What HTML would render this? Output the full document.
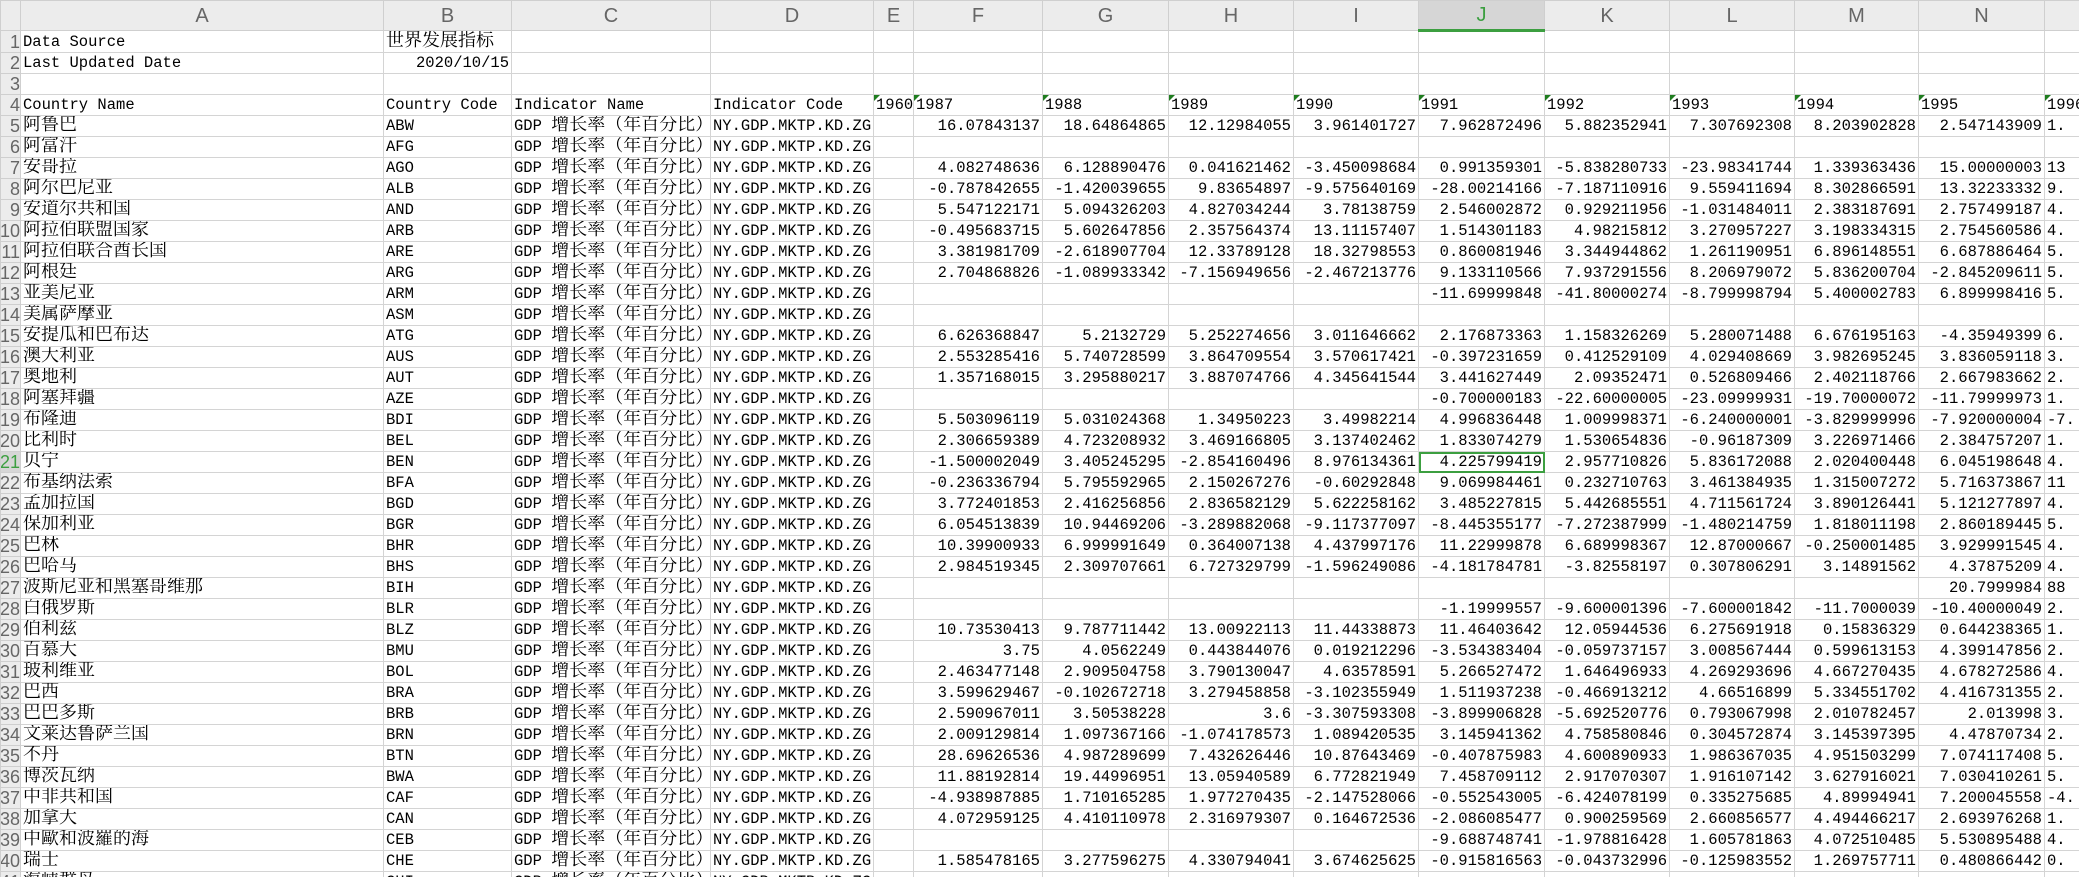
<!DOCTYPE html>
<html><head><meta charset="utf-8">
<style>
html,body{margin:0;padding:0;background:#fff;width:2079px;height:877px;overflow:hidden}
table{border-collapse:collapse;table-layout:fixed;width:2079px;font-family:"Liberation Mono","Noto Serif CJK SC",monospace;font-size:15.5px;color:#000}
td,th{border:1px solid #d4d4d4;height:20px;padding:0 2px;white-space:nowrap;overflow:hidden;line-height:20px;position:relative}
thead th{height:28px;background:#ececec;color:#666;font-family:"Liberation Sans",sans-serif;font-weight:normal;font-size:20px;border-color:#cfcfcf;text-align:center}
tbody th{background:#ececec;color:#666;font-family:"Liberation Sans",sans-serif;font-weight:normal;font-size:18px;text-align:right;padding:0;border-color:#cfcfcf;direction:rtl}
.c{font-size:18px}
b{font-weight:normal;font-size:18px}
tbody td:nth-child(n+7){text-align:right}
tbody td:nth-child(16){text-align:left}
tr.y td:nth-child(n+6){text-align:left}
tr.y td:nth-child(n+6)::before{content:"";position:absolute;left:0;top:0;border-top:6px solid #1f7d1f;border-right:6px solid transparent}
thead th.sel{background:#d6d6d6;color:#3c9f40;border-bottom:3px solid #3c9f40}
tbody th.sel{background:#d6d6d6;color:#3c9f40}
td.cur{outline:2px solid #3c9f40;outline-offset:-2px}
</style></head><body>
<table>
<colgroup><col style="width:20px"><col style="width:363px"><col style="width:128px"><col style="width:199px"><col style="width:163px"><col style="width:40px"><col style="width:129px"><col style="width:126px"><col style="width:125px"><col style="width:125px"><col style="width:126px"><col style="width:125px"><col style="width:125px"><col style="width:124px"><col style="width:126px"><col style="width:35px"></colgroup>
<thead><tr><th></th><th>A</th><th>B</th><th>C</th><th>D</th><th>E</th><th>F</th><th>G</th><th>H</th><th>I</th><th class="sel">J</th><th>K</th><th>L</th><th>M</th><th>N</th><th></th></tr></thead>
<tbody>
<tr><th>1</th><td>Data Source</td><td class="c">世界发展指标</td><td></td><td></td><td></td><td></td><td></td><td></td><td></td><td></td><td></td><td></td><td></td><td></td><td></td></tr>
<tr><th>2</th><td>Last Updated Date</td><td style="text-align:right">2020/10/15</td><td></td><td></td><td></td><td></td><td></td><td></td><td></td><td></td><td></td><td></td><td></td><td></td><td></td></tr>
<tr><th>3</th><td></td><td></td><td></td><td></td><td></td><td></td><td></td><td></td><td></td><td></td><td></td><td></td><td></td><td></td><td></td></tr>
<tr class="y"><th>4</th><td>Country Name</td><td>Country Code</td><td>Indicator Name</td><td>Indicator Code</td><td>1960</td><td>1987</td><td>1988</td><td>1989</td><td>1990</td><td>1991</td><td>1992</td><td>1993</td><td>1994</td><td>1995</td><td>1996</td></tr>
<tr><th>5</th><td class="c">阿鲁巴</td><td>ABW</td><td>GDP <b>增长率（年百分比）</b></td><td>NY.GDP.MKTP.KD.ZG</td><td></td><td>16.07843137</td><td>18.64864865</td><td>12.12984055</td><td>3.961401727</td><td>7.962872496</td><td>5.882352941</td><td>7.307692308</td><td>8.203902828</td><td>2.547143909</td><td>1.</td></tr>
<tr><th>6</th><td class="c">阿富汗</td><td>AFG</td><td>GDP <b>增长率（年百分比）</b></td><td>NY.GDP.MKTP.KD.ZG</td><td></td><td></td><td></td><td></td><td></td><td></td><td></td><td></td><td></td><td></td><td></td></tr>
<tr><th>7</th><td class="c">安哥拉</td><td>AGO</td><td>GDP <b>增长率（年百分比）</b></td><td>NY.GDP.MKTP.KD.ZG</td><td></td><td>4.082748636</td><td>6.128890476</td><td>0.041621462</td><td>-3.450098684</td><td>0.991359301</td><td>-5.838280733</td><td>-23.98341744</td><td>1.339363436</td><td>15.00000003</td><td>13</td></tr>
<tr><th>8</th><td class="c">阿尔巴尼亚</td><td>ALB</td><td>GDP <b>增长率（年百分比）</b></td><td>NY.GDP.MKTP.KD.ZG</td><td></td><td>-0.787842655</td><td>-1.420039655</td><td>9.83654897</td><td>-9.575640169</td><td>-28.00214166</td><td>-7.187110916</td><td>9.559411694</td><td>8.302866591</td><td>13.32233332</td><td>9.</td></tr>
<tr><th>9</th><td class="c">安道尔共和国</td><td>AND</td><td>GDP <b>增长率（年百分比）</b></td><td>NY.GDP.MKTP.KD.ZG</td><td></td><td>5.547122171</td><td>5.094326203</td><td>4.827034244</td><td>3.78138759</td><td>2.546002872</td><td>0.929211956</td><td>-1.031484011</td><td>2.383187691</td><td>2.757499187</td><td>4.</td></tr>
<tr><th>10</th><td class="c">阿拉伯联盟国家</td><td>ARB</td><td>GDP <b>增长率（年百分比）</b></td><td>NY.GDP.MKTP.KD.ZG</td><td></td><td>-0.495683715</td><td>5.602647856</td><td>2.357564374</td><td>13.11157407</td><td>1.514301183</td><td>4.98215812</td><td>3.270957227</td><td>3.198334315</td><td>2.754560586</td><td>4.</td></tr>
<tr><th>11</th><td class="c">阿拉伯联合酋长国</td><td>ARE</td><td>GDP <b>增长率（年百分比）</b></td><td>NY.GDP.MKTP.KD.ZG</td><td></td><td>3.381981709</td><td>-2.618907704</td><td>12.33789128</td><td>18.32798553</td><td>0.860081946</td><td>3.344944862</td><td>1.261190951</td><td>6.896148551</td><td>6.687886464</td><td>5.</td></tr>
<tr><th>12</th><td class="c">阿根廷</td><td>ARG</td><td>GDP <b>增长率（年百分比）</b></td><td>NY.GDP.MKTP.KD.ZG</td><td></td><td>2.704868826</td><td>-1.089933342</td><td>-7.156949656</td><td>-2.467213776</td><td>9.133110566</td><td>7.937291556</td><td>8.206979072</td><td>5.836200704</td><td>-2.845209611</td><td>5.</td></tr>
<tr><th>13</th><td class="c">亚美尼亚</td><td>ARM</td><td>GDP <b>增长率（年百分比）</b></td><td>NY.GDP.MKTP.KD.ZG</td><td></td><td></td><td></td><td></td><td></td><td>-11.69999848</td><td>-41.80000274</td><td>-8.799998794</td><td>5.400002783</td><td>6.899998416</td><td>5.</td></tr>
<tr><th>14</th><td class="c">美属萨摩亚</td><td>ASM</td><td>GDP <b>增长率（年百分比）</b></td><td>NY.GDP.MKTP.KD.ZG</td><td></td><td></td><td></td><td></td><td></td><td></td><td></td><td></td><td></td><td></td><td></td></tr>
<tr><th>15</th><td class="c">安提瓜和巴布达</td><td>ATG</td><td>GDP <b>增长率（年百分比）</b></td><td>NY.GDP.MKTP.KD.ZG</td><td></td><td>6.626368847</td><td>5.2132729</td><td>5.252274656</td><td>3.011646662</td><td>2.176873363</td><td>1.158326269</td><td>5.280071488</td><td>6.676195163</td><td>-4.35949399</td><td>6.</td></tr>
<tr><th>16</th><td class="c">澳大利亚</td><td>AUS</td><td>GDP <b>增长率（年百分比）</b></td><td>NY.GDP.MKTP.KD.ZG</td><td></td><td>2.553285416</td><td>5.740728599</td><td>3.864709554</td><td>3.570617421</td><td>-0.397231659</td><td>0.412529109</td><td>4.029408669</td><td>3.982695245</td><td>3.836059118</td><td>3.</td></tr>
<tr><th>17</th><td class="c">奥地利</td><td>AUT</td><td>GDP <b>增长率（年百分比）</b></td><td>NY.GDP.MKTP.KD.ZG</td><td></td><td>1.357168015</td><td>3.295880217</td><td>3.887074766</td><td>4.345641544</td><td>3.441627449</td><td>2.09352471</td><td>0.526809466</td><td>2.402118766</td><td>2.667983662</td><td>2.</td></tr>
<tr><th>18</th><td class="c">阿塞拜疆</td><td>AZE</td><td>GDP <b>增长率（年百分比）</b></td><td>NY.GDP.MKTP.KD.ZG</td><td></td><td></td><td></td><td></td><td></td><td>-0.700000183</td><td>-22.60000005</td><td>-23.09999931</td><td>-19.70000072</td><td>-11.79999973</td><td>1.</td></tr>
<tr><th>19</th><td class="c">布隆迪</td><td>BDI</td><td>GDP <b>增长率（年百分比）</b></td><td>NY.GDP.MKTP.KD.ZG</td><td></td><td>5.503096119</td><td>5.031024368</td><td>1.34950223</td><td>3.49982214</td><td>4.996836448</td><td>1.009998371</td><td>-6.240000001</td><td>-3.829999996</td><td>-7.920000004</td><td>-7.</td></tr>
<tr><th>20</th><td class="c">比利时</td><td>BEL</td><td>GDP <b>增长率（年百分比）</b></td><td>NY.GDP.MKTP.KD.ZG</td><td></td><td>2.306659389</td><td>4.723208932</td><td>3.469166805</td><td>3.137402462</td><td>1.833074279</td><td>1.530654836</td><td>-0.96187309</td><td>3.226971466</td><td>2.384757207</td><td>1.</td></tr>
<tr><th class="sel">21</th><td class="c">贝宁</td><td>BEN</td><td>GDP <b>增长率（年百分比）</b></td><td>NY.GDP.MKTP.KD.ZG</td><td></td><td>-1.500002049</td><td>3.405245295</td><td>-2.854160496</td><td>8.976134361</td><td class="cur">4.225799419</td><td>2.957710826</td><td>5.836172088</td><td>2.020400448</td><td>6.045198648</td><td>4.</td></tr>
<tr><th>22</th><td class="c">布基纳法索</td><td>BFA</td><td>GDP <b>增长率（年百分比）</b></td><td>NY.GDP.MKTP.KD.ZG</td><td></td><td>-0.236336794</td><td>5.795592965</td><td>2.150267276</td><td>-0.60292848</td><td>9.069984461</td><td>0.232710763</td><td>3.461384935</td><td>1.315007272</td><td>5.716373867</td><td>11</td></tr>
<tr><th>23</th><td class="c">孟加拉国</td><td>BGD</td><td>GDP <b>增长率（年百分比）</b></td><td>NY.GDP.MKTP.KD.ZG</td><td></td><td>3.772401853</td><td>2.416256856</td><td>2.836582129</td><td>5.622258162</td><td>3.485227815</td><td>5.442685551</td><td>4.711561724</td><td>3.890126441</td><td>5.121277897</td><td>4.</td></tr>
<tr><th>24</th><td class="c">保加利亚</td><td>BGR</td><td>GDP <b>增长率（年百分比）</b></td><td>NY.GDP.MKTP.KD.ZG</td><td></td><td>6.054513839</td><td>10.94469206</td><td>-3.289882068</td><td>-9.117377097</td><td>-8.445355177</td><td>-7.272387999</td><td>-1.480214759</td><td>1.818011198</td><td>2.860189445</td><td>5.</td></tr>
<tr><th>25</th><td class="c">巴林</td><td>BHR</td><td>GDP <b>增长率（年百分比）</b></td><td>NY.GDP.MKTP.KD.ZG</td><td></td><td>10.39900933</td><td>6.999991649</td><td>0.364007138</td><td>4.437997176</td><td>11.22999878</td><td>6.689998367</td><td>12.87000667</td><td>-0.250001485</td><td>3.929991545</td><td>4.</td></tr>
<tr><th>26</th><td class="c">巴哈马</td><td>BHS</td><td>GDP <b>增长率（年百分比）</b></td><td>NY.GDP.MKTP.KD.ZG</td><td></td><td>2.984519345</td><td>2.309707661</td><td>6.727329799</td><td>-1.596249086</td><td>-4.181784781</td><td>-3.82558197</td><td>0.307806291</td><td>3.14891562</td><td>4.37875209</td><td>4.</td></tr>
<tr><th>27</th><td class="c">波斯尼亚和黑塞哥维那</td><td>BIH</td><td>GDP <b>增长率（年百分比）</b></td><td>NY.GDP.MKTP.KD.ZG</td><td></td><td></td><td></td><td></td><td></td><td></td><td></td><td></td><td></td><td>20.7999984</td><td>88</td></tr>
<tr><th>28</th><td class="c">白俄罗斯</td><td>BLR</td><td>GDP <b>增长率（年百分比）</b></td><td>NY.GDP.MKTP.KD.ZG</td><td></td><td></td><td></td><td></td><td></td><td>-1.19999557</td><td>-9.600001396</td><td>-7.600001842</td><td>-11.7000039</td><td>-10.40000049</td><td>2.</td></tr>
<tr><th>29</th><td class="c">伯利兹</td><td>BLZ</td><td>GDP <b>增长率（年百分比）</b></td><td>NY.GDP.MKTP.KD.ZG</td><td></td><td>10.73530413</td><td>9.787711442</td><td>13.00922113</td><td>11.44338873</td><td>11.46403642</td><td>12.05944536</td><td>6.275691918</td><td>0.15836329</td><td>0.644238365</td><td>1.</td></tr>
<tr><th>30</th><td class="c">百慕大</td><td>BMU</td><td>GDP <b>增长率（年百分比）</b></td><td>NY.GDP.MKTP.KD.ZG</td><td></td><td>3.75</td><td>4.0562249</td><td>0.443844076</td><td>0.019212296</td><td>-3.534383404</td><td>-0.059737157</td><td>3.008567444</td><td>0.599613153</td><td>4.399147856</td><td>2.</td></tr>
<tr><th>31</th><td class="c">玻利维亚</td><td>BOL</td><td>GDP <b>增长率（年百分比）</b></td><td>NY.GDP.MKTP.KD.ZG</td><td></td><td>2.463477148</td><td>2.909504758</td><td>3.790130047</td><td>4.63578591</td><td>5.266527472</td><td>1.646496933</td><td>4.269293696</td><td>4.667270435</td><td>4.678272586</td><td>4.</td></tr>
<tr><th>32</th><td class="c">巴西</td><td>BRA</td><td>GDP <b>增长率（年百分比）</b></td><td>NY.GDP.MKTP.KD.ZG</td><td></td><td>3.599629467</td><td>-0.102672718</td><td>3.279458858</td><td>-3.102355949</td><td>1.511937238</td><td>-0.466913212</td><td>4.66516899</td><td>5.334551702</td><td>4.416731355</td><td>2.</td></tr>
<tr><th>33</th><td class="c">巴巴多斯</td><td>BRB</td><td>GDP <b>增长率（年百分比）</b></td><td>NY.GDP.MKTP.KD.ZG</td><td></td><td>2.590967011</td><td>3.50538228</td><td>3.6</td><td>-3.307593308</td><td>-3.899906828</td><td>-5.692520776</td><td>0.793067998</td><td>2.010782457</td><td>2.013998</td><td>3.</td></tr>
<tr><th>34</th><td class="c">文莱达鲁萨兰国</td><td>BRN</td><td>GDP <b>增长率（年百分比）</b></td><td>NY.GDP.MKTP.KD.ZG</td><td></td><td>2.009129814</td><td>1.097367166</td><td>-1.074178573</td><td>1.089420535</td><td>3.145941362</td><td>4.758580846</td><td>0.304572874</td><td>3.145397395</td><td>4.47870734</td><td>2.</td></tr>
<tr><th>35</th><td class="c">不丹</td><td>BTN</td><td>GDP <b>增长率（年百分比）</b></td><td>NY.GDP.MKTP.KD.ZG</td><td></td><td>28.69626536</td><td>4.987289699</td><td>7.432626446</td><td>10.87643469</td><td>-0.407875983</td><td>4.600890933</td><td>1.986367035</td><td>4.951503299</td><td>7.074117408</td><td>5.</td></tr>
<tr><th>36</th><td class="c">博茨瓦纳</td><td>BWA</td><td>GDP <b>增长率（年百分比）</b></td><td>NY.GDP.MKTP.KD.ZG</td><td></td><td>11.88192814</td><td>19.44996951</td><td>13.05940589</td><td>6.772821949</td><td>7.458709112</td><td>2.917070307</td><td>1.916107142</td><td>3.627916021</td><td>7.030410261</td><td>5.</td></tr>
<tr><th>37</th><td class="c">中非共和国</td><td>CAF</td><td>GDP <b>增长率（年百分比）</b></td><td>NY.GDP.MKTP.KD.ZG</td><td></td><td>-4.938987885</td><td>1.710165285</td><td>1.977270435</td><td>-2.147528066</td><td>-0.552543005</td><td>-6.424078199</td><td>0.335275685</td><td>4.89994941</td><td>7.200045558</td><td>-4.</td></tr>
<tr><th>38</th><td class="c">加拿大</td><td>CAN</td><td>GDP <b>增长率（年百分比）</b></td><td>NY.GDP.MKTP.KD.ZG</td><td></td><td>4.072959125</td><td>4.410110978</td><td>2.316979307</td><td>0.164672536</td><td>-2.086085477</td><td>0.900259569</td><td>2.660856577</td><td>4.494466217</td><td>2.693976268</td><td>1.</td></tr>
<tr><th>39</th><td class="c">中歐和波羅的海</td><td>CEB</td><td>GDP <b>增长率（年百分比）</b></td><td>NY.GDP.MKTP.KD.ZG</td><td></td><td></td><td></td><td></td><td></td><td>-9.688748741</td><td>-1.978816428</td><td>1.605781863</td><td>4.072510485</td><td>5.530895488</td><td>4.</td></tr>
<tr><th>40</th><td class="c">瑞士</td><td>CHE</td><td>GDP <b>增长率（年百分比）</b></td><td>NY.GDP.MKTP.KD.ZG</td><td></td><td>1.585478165</td><td>3.277596275</td><td>4.330794041</td><td>3.674625625</td><td>-0.915816563</td><td>-0.043732996</td><td>-0.125983552</td><td>1.269757711</td><td>0.480866442</td><td>0.</td></tr>
<tr><th>41</th><td class="c">海峡群岛</td><td>CHI</td><td>GDP <b>增长率（年百分比）</b></td><td>NY.GDP.MKTP.KD.ZG</td><td></td><td></td><td></td><td></td><td></td><td></td><td></td><td></td><td></td><td></td><td></td></tr>
</tbody></table>
</body></html>
